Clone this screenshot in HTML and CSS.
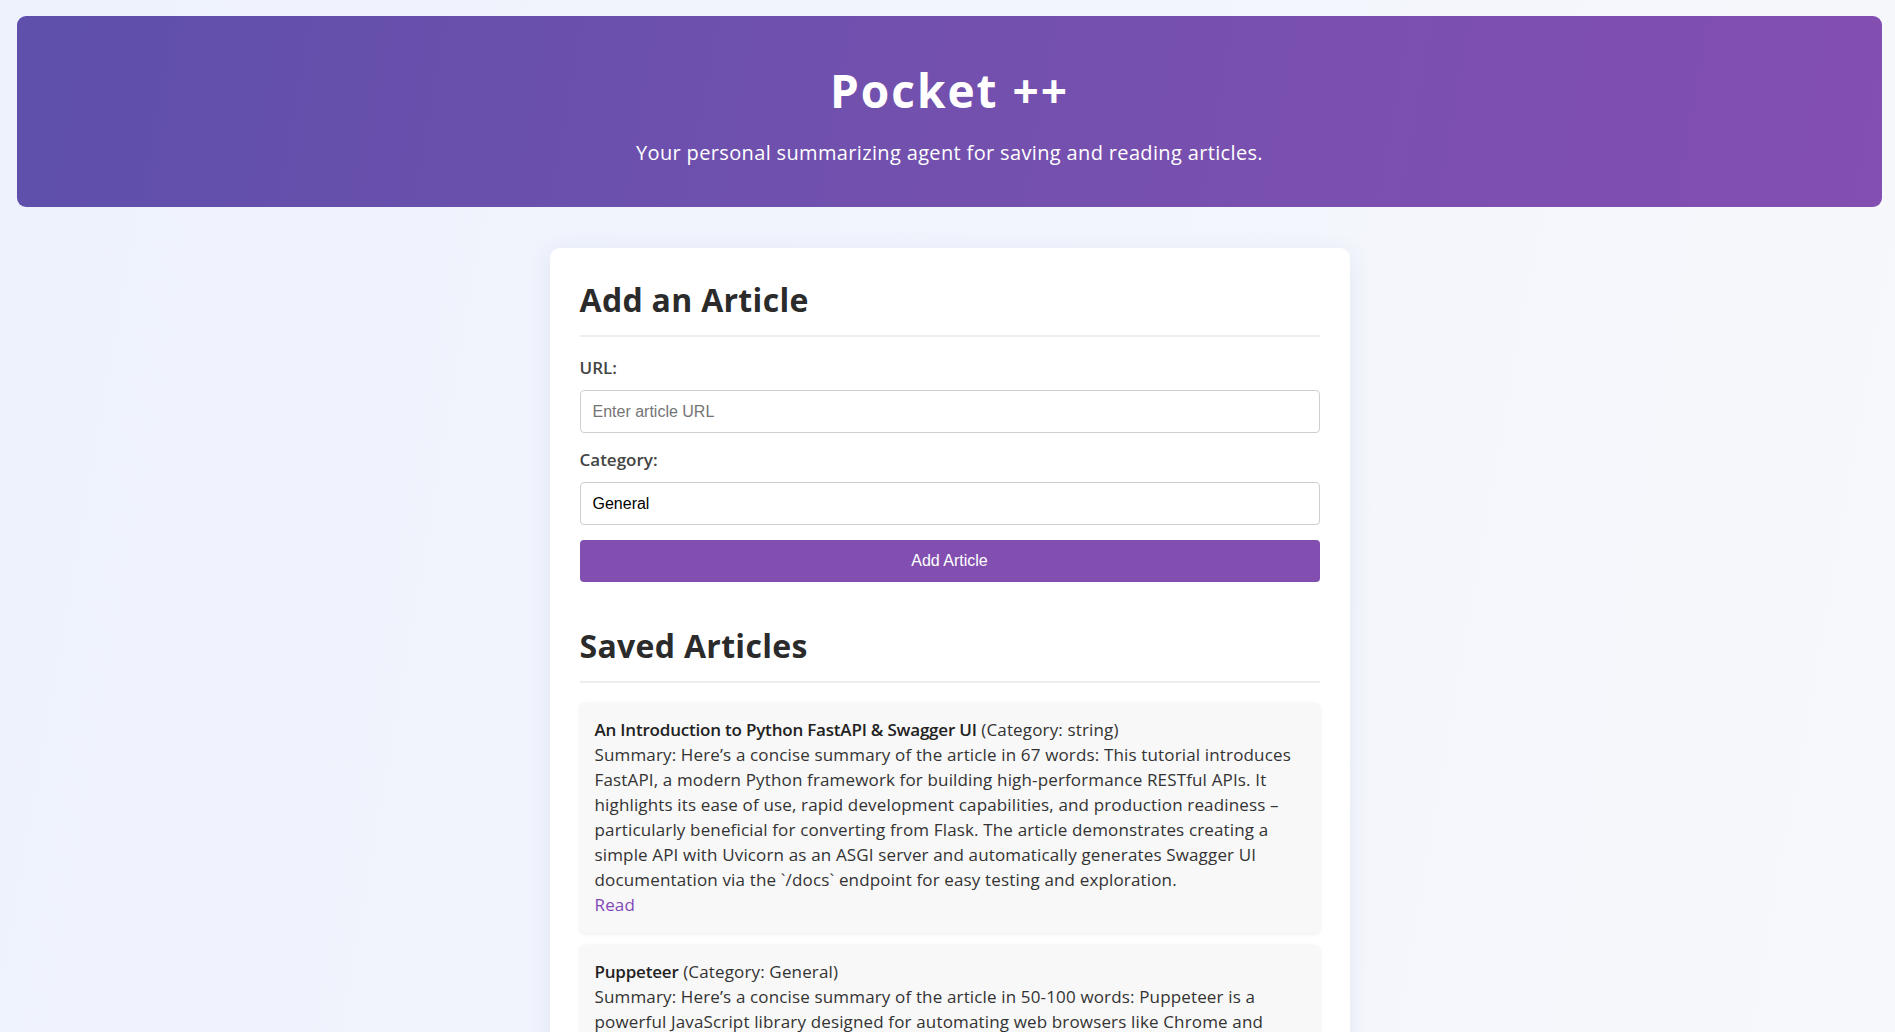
FILE: index.html
```html
<!DOCTYPE html>
<html lang="en">
<head>
<meta charset="utf-8">
<title>Pocket ++</title>
<link rel="stylesheet" href="styles.css">
</head>
<body>
<div class="page">
  <header class="hero">
    <h1 class="hero-title">Pocket ++</h1>
    <p class="hero-sub">Your personal summarizing agent for saving and reading articles.</p>
  </header>

  <main class="card">
    <h2 class="section-title">Add an Article</h2>
    <form class="form">
      <label class="label" for="url">URL:</label>
      <input class="field" id="url" type="text" placeholder="Enter article URL">
      <label class="label" for="cat">Category:</label>
      <input class="field" id="cat" type="text" value="General">
      <button class="btn" type="button">Add Article</button>
    </form>

    <h2 class="section-title saved">Saved Articles</h2>
    <ul class="list">
      <li class="item">
        <strong>An Introduction to Python FastAPI &amp; Swagger UI</strong> (Category: string)<br>
        Summary: Here’s a concise summary of the article in 67 words: This tutorial introduces FastAPI, a modern Python framework for building high-performance RESTful APIs. It highlights its ease of use, rapid development capabilities, and production readiness – particularly beneficial for converting from Flask. The article demonstrates creating a simple API with Uvicorn as an ASGI server and automatically generates Swagger UI documentation via the `/docs` endpoint for easy testing and exploration.<br>
        <a class="read" href="#">Read</a>
      </li>
      <li class="item">
        <strong>Puppeteer</strong> (Category: General)<br>
        Summary: Here’s a concise summary of the article in 50-100 words: Puppeteer is a powerful JavaScript library designed for automating web browsers like Chrome and Firefox. It allows developers to control a browser programmatically, making it useful for tasks like web scraping, automated testing, and generating screenshots or PDFs of web pages.<br>
        <a class="read" href="#">Read</a>
      </li>
    </ul>
  </main>
</div>
</body>
</html>
```

FILE: styles.css
```css
html, body {
  margin: 0;
  padding: 0;
}

body {
  font-family: "Open Sans", "Liberation Sans", sans-serif;
  color: #333;
  background: linear-gradient(100deg, #eef2fc 0%, #f2f5fd 50%, #f7f8fb 100%);
  min-height: 100vh;
}

.page {
  padding: 16px 13px 40px 17px;
}

.hero {
  background: linear-gradient(100deg, #5e50ab 0%, #7350ae 50%, #834fb1 100%);
  border-radius: 9px;
  height: 191px;
  box-sizing: border-box;
  padding-top: 44px;
  text-align: center;
  color: #fff;
}

.hero-title {
  margin: 0;
  font-size: 46px;
  letter-spacing: 2px;
  line-height: 60px;
  font-weight: 700;
}

.hero-sub {
  margin: 20px 0 0;
  font-size: 20px;
  letter-spacing: 0.35px;
  line-height: 26px;
}

.card {
  width: 800px;
  box-sizing: border-box;
  margin: 41px auto 0;
  background: #fff;
  border-radius: 10px;
  padding: 30px 30px 30px;
  box-shadow: 0 4px 24px rgba(40, 60, 120, 0.08);
}

.section-title {
  margin: 0;
  font-size: 32px;
  letter-spacing: 0.3px;
  line-height: 44px;
  font-weight: 700;
  color: #2b2b2b;
  padding-bottom: 13px;
  border-bottom: 2px solid #eeeeee;
}

.section-title.saved {
  margin-top: 42px;
}

.form {
  display: flex;
  flex-direction: column;
  padding-top: 20px;
}

.label {
  font-size: 17px;
  font-weight: 600;
  line-height: 22px;
  color: #444;
  margin-bottom: 11px;
}

.field {
  height: 43px;
  box-sizing: border-box;
  border: 1px solid #cfcfcf;
  border-radius: 4px;
  padding: 0 12px;
  font-family: "Liberation Sans", Arial, sans-serif;
  font-size: 16px;
  color: #000;
  margin-bottom: 16px;
  background: #fff;
}

.field::placeholder {
  color: #757575;
}

.btn {
  height: 42px;
  border: 0;
  border-radius: 4px;
  background: #824fb0;
  color: #fff;
  font-family: "Liberation Sans", Arial, sans-serif;
  font-size: 16px;
  margin-top: -1px;
}

.list {
  list-style: none;
  margin: 20px 0 0;
  padding: 0;
}

.item {
  background: #f8f8f8;
  border-radius: 5px;
  padding: 14px 15px 16px;
  margin-bottom: 12px;
  font-size: 17px;
  letter-spacing: 0.15px;
  line-height: 25px;
  box-shadow: 0 1px 4px rgba(0, 0, 0, 0.08);
}

.item strong {
  font-weight: 600;
  letter-spacing: -0.2px;
  color: #222;
}

.read {
  color: #8447b8;
  text-decoration: none;
}
```
